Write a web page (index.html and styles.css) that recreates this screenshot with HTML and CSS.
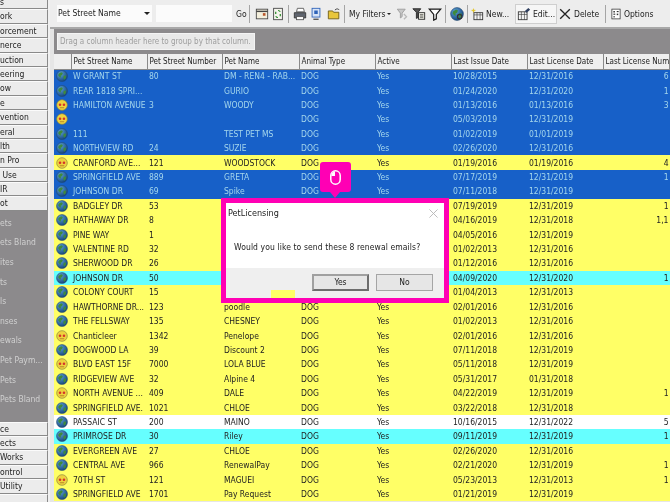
FILE: index.html
```html
<!DOCTYPE html>
<html lang="en">
<head>
    <meta charset="UTF-8">
    <title>PetLicensing</title>
    <link rel="stylesheet" href="styles.css">
</head>
<body>
    <svg class="defs" width="0" height="0">
        <defs>
            <radialGradient id="sea" cx="35%" cy="30%" r="80%">
                <stop offset="0" stop-color="#5c9fd8"/>
                <stop offset="1" stop-color="#0f3f76"/>
            </radialGradient>
            <symbol id="globe" viewBox="0 0 14 14">
                <circle cx="7" cy="7" r="6.400" fill="url(#sea)" stroke="#24466c" stroke-width=".6"/>
                <path d="M3 4.500 6 2.600 8 3.600 7 6 5.500 6.400 5.800 8.800 4.400 8.600 2.600 6.400Z" fill="#3f8a3c"/>
                <path d="M9 6.600 11.800 6.400 11.400 9.600 9.400 11.400 8.600 9Z" fill="#3f8a3c"/>
            </symbol>
            <symbol id="smiley" viewBox="0 0 14 14">
                <circle cx="7" cy="7" r="6.200" fill="#eed23e" stroke="#8f8440" stroke-width=".8"/>
                <circle cx="4.700" cy="6.800" r="1.500" fill="#d6342a"/>
                <circle cx="9.300" cy="6.800" r="1.500" fill="#d6342a"/>
                <path d="M4.500 10.200h5" stroke="#a06a20" stroke-width=".8"/>
            </symbol>
        </defs>
    </svg>

    <div class="app">
        <nav class="sidebar">
            <div class="nav-group top">
                <div class="nav-btn">s</div>
                <div class="nav-btn">ork</div>
                <div class="nav-btn">orcement</div>
                <div class="nav-btn">nerce</div>
                <div class="nav-btn">uction</div>
                <div class="nav-btn">eering</div>
                <div class="nav-btn">ow</div>
                <div class="nav-btn">e</div>
                <div class="nav-btn">vention</div>
                <div class="nav-btn">eral</div>
                <div class="nav-btn">lth</div>
                <div class="nav-btn">n Pro</div>
                <div class="nav-btn">&nbsp;Use</div>
                <div class="nav-btn">IR</div>
                <div class="nav-btn">ot</div>
            </div>
            <div class="nav-links">
                <div>ets</div>
                <div>ets Bland</div>
                <div>ites</div>
                <div>ts</div>
                <div>ls</div>
                <div>nses</div>
                <div>ewals</div>
                <div>Pet Paym...</div>
                <div>Pets</div>
                <div>Pets Bland</div>
            </div>
            <div class="nav-group bottom">
                <div class="nav-btn">ce</div>
                <div class="nav-btn">ects</div>
                <div class="nav-btn">Works</div>
                <div class="nav-btn">ontrol</div>
                <div class="nav-btn">Utility</div>
                <div class="nav-btn"></div>
            </div>
        </nav>

        <main class="content">
            <div class="toolbar">
                <div class="field-select">Pet Street Name<span class="caret"></span></div>
                <div class="field-input"></div>
                <span class="tool-text go">Go</span>
                <span class="sep"></span>
                <svg class="ico first" viewBox="0 0 16 16"><rect x="1.500" y="2.500" width="13" height="11" fill="#f4efdc" stroke="#444"/><path d="M1.500 5h13" stroke="#444" stroke-width="1.600"/><rect x="9" y="7" width="3" height="3" fill="#b8562a"/></svg>
                <svg class="ico" viewBox="0 0 16 16"><rect x="3" y="1.500" width="10" height="13" fill="#f4f4ec" stroke="#444"/><path d="M8 4a3 3 0 0 1 2.600 1.500M8 12a3 3 0 0 1-2.600-1.500M5.400 5.500V8M10.600 8v2.500" stroke="#2a8a2a" stroke-width="1.400" fill="none"/></svg>
                <span class="sep"></span>
                <svg class="ico" viewBox="0 0 16 16"><path d="M5 1.500h7l1 4H4z" fill="#fff" stroke="#555"/><path d="M1.500 6.500h13v6h-13z" fill="#5f646e" stroke="#333"/><rect x="4" y="11" width="8" height="3.500" fill="#fff" stroke="#555"/></svg>
                <svg class="ico" viewBox="0 0 16 16"><rect x="3.500" y="1.500" width="9" height="10" fill="#d7e4f7" stroke="#2d62b8"/><rect x="6" y="4" width="4" height="4" fill="#2d62b8"/><path d="M5 14h6" stroke="#444" stroke-width="1.400"/></svg>
                <svg class="ico folder" viewBox="0 0 16 16"><path d="M1.500 4.500h5l1 1.500h6v7.500h-12z" fill="#e8c63c" stroke="#6d5a14"/><path d="M9 3.500c2-2 4-1.500 5 0" stroke="#333" fill="none"/></svg>
                <span class="sep"></span>
                <span class="tool-text filters">My Filters<span class="small-caret"></span></span>
                <svg class="ico" viewBox="0 0 16 16"><path d="M1.500 2.500h9L7 7v4l-2 1.500V7z" fill="#c8c8c8" stroke="#9a9a9a"/><path d="M9 8l3 3-3 3" stroke="#b9b9b9" stroke-width="1.500" fill="none"/></svg>
                <svg class="ico" viewBox="0 0 16 16"><path d="M1 2h9L7 6v6l-2 1V6z" fill="#555" stroke="#222"/><rect x="7.500" y="6.500" width="7" height="7.500" fill="#f2f2e8" stroke="#222"/><path d="M9 9h4M9 11.500h4" stroke="#222"/></svg>
                <svg class="ico" viewBox="0 0 16 16"><path d="M1.500 2.500h13L9.500 8.500v5l-3 1.500V8.500z" fill="#fff" stroke="#1a1a1a" stroke-width="1.400"/></svg>
                <span class="sep"></span>
                <svg class="ico" viewBox="0 0 16 16"><use href="#globe"/><circle cx="11" cy="11" r="2.500" fill="none" stroke="#333" stroke-width="1.400"/></svg>
                <span class="sep tight"></span>
                <span class="tool-btn new"><svg class="ico" viewBox="0 0 16 16"><path d="M4 1l.7 2L7 3.500 5 4.500 4 7 3 4.500 1 3.500l2.300-.5z" fill="#e3c52a"/><rect x="4.500" y="6.500" width="10" height="8" fill="#f4f4f4" stroke="#333"/><path d="M4.500 9h10M8 6.500v8M11.500 6.500v8" stroke="#333" stroke-width=".7"/></svg>New...</span>
                <span class="tool-btn active"><svg class="ico" viewBox="0 0 16 16"><rect x="1.500" y="5.500" width="10" height="9" fill="#f4f4f4" stroke="#333"/><path d="M1.500 8.500h10M5 5.500v9M8.500 5.500v9" stroke="#333" stroke-width=".7"/><path d="M9 4.500 13 1l2 2-4 3.500z" fill="#2f3f5f"/></svg>Edit...</span>
                <span class="tool-btn delete"><svg class="ico" viewBox="0 0 16 16"><path d="M2.500 2.500 13.500 13.500M13.500 2.500 2.500 13.500" stroke="#222" stroke-width="1.500"/></svg>Delete</span>
                <span class="sep"></span>
                <span class="tool-btn"><svg class="ico narrow" viewBox="0 0 16 16"><rect x="2.500" y="1.500" width="11" height="13" fill="#fff" stroke="#333"/><rect x="4.500" y="4" width="2" height="2" fill="#333"/><rect x="9" y="4" width="2.500" height="1.500" fill="#333"/><rect x="4.500" y="7.500" width="2.500" height="1.500" fill="#333"/><rect x="9" y="7.500" width="2" height="2" fill="#333"/><rect x="4.500" y="11" width="2" height="1.500" fill="#333"/></svg>Options</span>
            </div>

            <div class="group-panel">
                <div class="group-hint">Drag a column header here to group by that column.</div>
            </div>
            <div class="grid-wrap">
                <table class="grid">
                    <colgroup>
                        <col class="c-ind"><col class="c-name"><col class="c-num"><col class="c-pet"><col class="c-type"><col class="c-act"><col class="c-date"><col class="c-date"><col>
                    </colgroup>
                    <thead>
                        <tr><th></th><th>Pet Street Name</th><th>Pet Street Number</th><th>Pet Name</th><th>Animal Type</th><th>Active</th><th>Last Issue Date</th><th>Last License Date</th><th>Last License Num...</th></tr>
                    </thead>
                    <tbody>
                        <tr class="sel"><td><svg class="flag"><use href="#globe"/></svg></td><td>W GRANT ST</td><td>80</td><td>DM - REN4 - RAB...</td><td>DOG</td><td>Yes</td><td>10/28/2015</td><td>12/31/2016</td><td class="r">6</td></tr>
                        <tr class="sel"><td><svg class="flag"><use href="#globe"/></svg></td><td>REAR 1818 SPRI...</td><td></td><td>GURIO</td><td>DOG</td><td>Yes</td><td>01/24/2020</td><td>12/31/2020</td><td class="r">1</td></tr>
                        <tr class="sel"><td><svg class="flag"><use href="#smiley"/></svg></td><td>HAMILTON AVENUE</td><td>3</td><td>WOODY</td><td>DOG</td><td>Yes</td><td>01/13/2016</td><td>01/13/2016</td><td class="r">3</td></tr>
                        <tr class="sel"><td><svg class="flag"><use href="#smiley"/></svg></td><td></td><td></td><td></td><td>DOG</td><td>Yes</td><td>05/03/2019</td><td>12/31/2019</td><td></td></tr>
                        <tr class="sel"><td><svg class="flag"><use href="#globe"/></svg></td><td>111</td><td></td><td>TEST PET MS</td><td>DOG</td><td>Yes</td><td>01/02/2019</td><td>01/01/2019</td><td></td></tr>
                        <tr class="sel"><td><svg class="flag"><use href="#globe"/></svg></td><td>NORTHVIEW RD</td><td>24</td><td>SUZIE</td><td>DOG</td><td>Yes</td><td>02/26/2020</td><td>12/31/2016</td><td></td></tr>
                        <tr><td><svg class="flag"><use href="#smiley"/></svg></td><td>CRANFORD AVE...</td><td>121</td><td>WOODSTOCK</td><td>DOG</td><td>Yes</td><td>01/19/2016</td><td>01/19/2016</td><td class="r">4</td></tr>
                        <tr class="sel"><td><svg class="flag"><use href="#globe"/></svg></td><td>SPRINGFIELD AVE</td><td>889</td><td>GRETA</td><td>DOG</td><td>Yes</td><td>07/17/2019</td><td>12/31/2019</td><td class="r">1</td></tr>
                        <tr class="sel"><td><svg class="flag"><use href="#globe"/></svg></td><td>JOHNSON DR</td><td>69</td><td>Spike</td><td>DOG</td><td>Yes</td><td>07/11/2018</td><td>12/31/2019</td><td></td></tr>
                        <tr><td><svg class="flag"><use href="#globe"/></svg></td><td>BADGLEY DR</td><td>53</td><td></td><td></td><td></td><td>07/19/2019</td><td>12/31/2019</td><td class="r">1</td></tr>
                        <tr><td><svg class="flag"><use href="#globe"/></svg></td><td>HATHAWAY DR</td><td>8</td><td></td><td></td><td></td><td>04/16/2019</td><td>12/31/2018</td><td class="r">1,1</td></tr>
                        <tr><td><svg class="flag"><use href="#globe"/></svg></td><td>PINE WAY</td><td>1</td><td></td><td></td><td></td><td>04/05/2016</td><td>12/31/2019</td><td></td></tr>
                        <tr><td><svg class="flag"><use href="#globe"/></svg></td><td>VALENTINE RD</td><td>32</td><td></td><td></td><td></td><td>01/02/2013</td><td>12/31/2016</td><td></td></tr>
                        <tr><td><svg class="flag"><use href="#globe"/></svg></td><td>SHERWOOD DR</td><td>26</td><td></td><td></td><td></td><td>01/12/2016</td><td>12/31/2016</td><td></td></tr>
                        <tr class="hit"><td><svg class="flag"><use href="#globe"/></svg></td><td>JOHNSON DR</td><td>50</td><td></td><td></td><td></td><td>04/09/2020</td><td>12/31/2020</td><td class="r">1</td></tr>
                        <tr><td><svg class="flag"><use href="#globe"/></svg></td><td>COLONY COURT</td><td>15</td><td></td><td></td><td></td><td>01/04/2013</td><td>12/31/2013</td><td></td></tr>
                        <tr><td><svg class="flag"><use href="#globe"/></svg></td><td>HAWTHORNE DR...</td><td>123</td><td>poodle</td><td>DOG</td><td>Yes</td><td>02/01/2016</td><td>12/31/2016</td><td></td></tr>
                        <tr><td><svg class="flag"><use href="#globe"/></svg></td><td>THE FELLSWAY</td><td>135</td><td>CHESNEY</td><td>DOG</td><td>Yes</td><td>01/02/2013</td><td>12/31/2016</td><td></td></tr>
                        <tr><td><svg class="flag"><use href="#smiley"/></svg></td><td>Chanticleer</td><td>1342</td><td>Penelope</td><td>DOG</td><td>Yes</td><td>02/01/2016</td><td>12/31/2016</td><td></td></tr>
                        <tr><td><svg class="flag"><use href="#globe"/></svg></td><td>DOGWOOD LA</td><td>39</td><td>Discount 2</td><td>DOG</td><td>Yes</td><td>07/11/2018</td><td>12/31/2019</td><td></td></tr>
                        <tr><td><svg class="flag"><use href="#smiley"/></svg></td><td>BLVD EAST 15F</td><td>7000</td><td>LOLA BLUE</td><td>DOG</td><td>Yes</td><td>05/11/2018</td><td>12/31/2019</td><td></td></tr>
                        <tr><td><svg class="flag"><use href="#globe"/></svg></td><td>RIDGEVIEW AVE</td><td>32</td><td>Alpine 4</td><td>DOG</td><td>Yes</td><td>05/31/2017</td><td>01/31/2018</td><td></td></tr>
                        <tr><td><svg class="flag"><use href="#smiley"/></svg></td><td>NORTH AVENUE ...</td><td>409</td><td>DALE</td><td>DOG</td><td>Yes</td><td>04/22/2019</td><td>12/31/2019</td><td class="r">1</td></tr>
                        <tr><td><svg class="flag"><use href="#globe"/></svg></td><td>SPRINGFIELD AVE.</td><td>1021</td><td>CHLOE</td><td>DOG</td><td>Yes</td><td>03/22/2018</td><td>12/31/2018</td><td></td></tr>
                        <tr class="plain"><td><svg class="flag"><use href="#globe"/></svg></td><td>PASSAIC ST</td><td>200</td><td>MAINO</td><td>DOG</td><td>Yes</td><td>10/16/2015</td><td>12/31/2022</td><td class="r">5</td></tr>
                        <tr class="hit"><td><svg class="flag"><use href="#globe"/></svg></td><td>PRIMROSE DR</td><td>30</td><td>Riley</td><td>DOG</td><td>Yes</td><td>09/11/2019</td><td>12/31/2019</td><td class="r">1</td></tr>
                        <tr><td><svg class="flag"><use href="#globe"/></svg></td><td>EVERGREEN AVE</td><td>27</td><td>CHLOE</td><td>DOG</td><td>Yes</td><td>02/26/2020</td><td>12/31/2016</td><td></td></tr>
                        <tr><td><svg class="flag"><use href="#globe"/></svg></td><td>CENTRAL AVE</td><td>966</td><td>RenewalPay</td><td>DOG</td><td>Yes</td><td>02/21/2020</td><td>12/31/2019</td><td class="r">1</td></tr>
                        <tr><td><svg class="flag"><use href="#smiley"/></svg></td><td>70TH ST</td><td>121</td><td>MAGUEI</td><td>DOG</td><td>Yes</td><td>05/23/2013</td><td>12/31/2013</td><td class="r">1</td></tr>
                        <tr><td><svg class="flag"><use href="#globe"/></svg></td><td>SPRINGFIELD AVE</td><td>1701</td><td>Pay Request</td><td>DOG</td><td>Yes</td><td>01/21/2019</td><td>12/31/2019</td><td></td></tr>
                    </tbody>
                </table>
            </div>
        </main>

        <div class="callout">
            <svg class="mouse" viewBox="0 0 11 15"><rect x=".8" y=".8" width="9.400" height="13.400" rx="4.700" fill="none" stroke="#fff" stroke-width="1.500"/><path d="M1.500 6V5a4 4 0 0 1 3.500-3.700V6z" fill="#fff"/></svg>
        </div>

        <div class="dialog">
            <div class="dialog-head">
                <span>PetLicensing</span>
                <svg class="close" viewBox="0 0 10 10"><path d="M.5.500 9.500 9.500M9.500.500.500 9.500" stroke="#b5b5b5"/></svg>
            </div>
            <p class="dialog-msg">Would you like to send these 8 renewal emails?</p>
            <div class="dialog-foot">
                <span class="btn default">Yes</span>
                <span class="btn">No</span>
            </div>
            <span class="dialog-patch"></span>
        </div>
    </div>
</body>
</html>
```

FILE: styles.css
```css
* {
    box-sizing: border-box;
}

html, body {
    margin: 0;
    height: 502px;
    overflow: hidden;
}

body {
    font-family: "DejaVu Sans", "Liberation Sans", sans-serif;
    font-stretch: condensed;
    font-size: 8.500px;
    color: #222;
    background-color: #e4e4e4;
}

.defs {
    display: block;
    height: 0;
}

.app {
    position: relative;
    display: flex;
    width: 670px;
    height: 502px;
    overflow: hidden;
    filter: blur(0.3px);
}

/* left navigation, cut off by the window edge */
.sidebar {
    flex: 0 0 50px;
    display: flex;
    flex-direction: column;
    overflow: hidden;
    background-color: #8c8a8c;
    border-right: 2px solid #f0f0f0;
}

.nav-group.top {
    margin-top: -5px;
}

.nav-btn {
    height: 14.400px;
    line-height: 13px;
    white-space: nowrap;
    overflow: hidden;
    background-color: #ececec;
    border: 1px solid #fbfbfb;
    border-left: 0;
    border-right-color: #8a8a8a;
    border-bottom-color: #8a8a8a;
}

.nav-links {
    flex: 1;
    padding-top: 3px;
    color: #d0d0d0;
}

.nav-links div {
    height: 19.600px;
    line-height: 19.600px;
    white-space: nowrap;
}

.nav-group.bottom {
    margin-bottom: -6px;
}

.content {
    flex: 1;
    min-width: 0;
}

/* toolbar */
.toolbar {
    display: flex;
    align-items: center;
    height: 29px;
    padding-left: 7px;
    background-color: #ededed;
    border-bottom: 2px solid #a8a8a8;
    white-space: nowrap;
}

.field-select {
    position: relative;
    flex: none;
    width: 95px;
    height: 17px;
    line-height: 17px;
    padding-left: 1px;
    background-color: #fbfbfb;
}

.caret {
    position: absolute;
    right: 2px;
    top: 7px;
    border: 3px solid transparent;
    border-top-color: #222;
    border-bottom: 0;
}

.small-caret {
    display: inline-block;
    margin-left: 2px;
    vertical-align: middle;
    border: 2px solid transparent;
    border-top-color: #222;
    border-bottom: 0;
}

.field-input {
    flex: none;
    width: 76px;
    height: 17px;
    margin-left: 4px;
    background-color: #fbfbfb;
}

.go {
    flex: none;
    width: 11px;
    margin-left: 4px;
}

.filters {
    flex: none;
    width: 46px;
    margin-left: 1px;
}

.sep {
    flex: none;
    width: 1px;
    height: 18px;
    margin: 0 3px 0 2px;
    background-color: #a5a5a5;
}

.sep.tight {
    margin-right: 1px;
}

.ico {
    flex: none;
    width: 14px;
    height: 14px;
    margin: 0 1px;
}

.ico.first {
    margin-left: 2px;
}

.ico.folder {
    margin-left: 3px;
}

.ico.narrow {
    width: 12px;
}

.tool-btn {
    flex: none;
    display: flex;
    align-items: center;
    gap: 1px;
    height: 20px;
}

.tool-btn.new {
    width: 46px;
}

.tool-btn.active {
    width: 42px;
    background-color: #f6f6f6;
    border: 1px solid #cfcfcf;
}

.tool-btn.delete {
    width: 46px;
}

/* grid */
.group-panel {
    height: 25px;
    margin-left: 4px;
    padding: 4px 0 0 3px;
    background-color: #8c8a8c;
}

.group-hint {
    display: inline-block;
    height: 17px;
    line-height: 15px;
    padding: 0 3px 0 2px;
    font-size: 8px;
    color: #9d9d9d;
    background-color: #e9e9e9;
    border: 1px solid #f4f4f4;
}

.grid-wrap {
    height: 448px;
    overflow: hidden;
    padding-left: 4px;
    background-color: #e6e6e6;
}

.grid {
    width: 616px;
    table-layout: fixed;
    border-collapse: collapse;
}

.c-ind { width: 17px; }
.c-name { width: 76px; }
.c-num { width: 75px; }
.c-pet { width: 77px; }
.c-type { width: 76px; }
.c-act { width: 76px; }
.c-date { width: 76px; }

.grid th {
    height: 15px;
    padding: 0 0 0 2px;
    font-size: 8px;
    font-weight: normal;
    text-align: left;
    white-space: nowrap;
    overflow: hidden;
    background-color: #efefef;
    border-right: 1px solid #8a8a8a;
    border-bottom: 1px solid #8a8a8a;
}

.grid td {
    height: 14.420px;
    padding: 0 0 0 2px;
    line-height: 12px;
    white-space: nowrap;
    overflow: hidden;
    background-color: #ffff66;
}

.grid td.r {
    text-align: right;
    padding-right: 1px;
}

.grid tr.sel td {
    color: #a4d6ec;
    background-color: #1760c8;
}

.grid tr.hit td {
    background-color: #66ffff;
}

.grid tr.plain td {
    background-color: #fff;
}

.flag {
    display: block;
    width: 12px;
    height: 12px;
}

/* things lying over the grid */
.callout {
    position: absolute;
    left: 320px;
    top: 162px;
    width: 31px;
    height: 30px;
    display: flex;
    align-items: center;
    justify-content: center;
    background-color: #ff00b4;
    border-radius: 3px;
}

.callout::after {
    content: "";
    position: absolute;
    left: 10px;
    bottom: -6px;
    border: 5px solid transparent;
    border-top: 6px solid #ff00b4;
    border-bottom: 0;
}

.mouse {
    width: 11px;
    height: 15px;
}

.dialog {
    position: absolute;
    left: 221px;
    top: 198px;
    width: 228px;
    height: 105px;
    display: flex;
    flex-direction: column;
    background-color: #fff;
    border: 5px solid #ff00b4;
}

.dialog-head {
    display: flex;
    align-items: center;
    justify-content: space-between;
    height: 20px;
    padding: 0 6px 0 2px;
    font-size: 9px;
}

.close {
    width: 9px;
    height: 9px;
}

.dialog-msg {
    flex: 1;
    margin: 0;
    padding: 19px 0 0 8px;
    letter-spacing: 0.1px;
}

.dialog-foot {
    display: flex;
    justify-content: flex-end;
    align-items: flex-start;
    gap: 7px;
    height: 30px;
    padding: 6px 11px 0 0;
    background-color: #efefef;
}

.btn {
    width: 57px;
    height: 17px;
    line-height: 15px;
    text-align: center;
    background-color: #e6e6e6;
    border: 1px solid #a5a5a5;
}

.btn.default {
    border: 2px solid #6d6d6d;
    border-top-color: #a0a0a0;
    border-left-color: #a0a0a0;
    line-height: 13px;
}

.dialog-patch {
    position: absolute;
    left: 45px;
    bottom: 0;
    width: 24px;
    height: 8px;
    background-color: #ffff66;
}
```
